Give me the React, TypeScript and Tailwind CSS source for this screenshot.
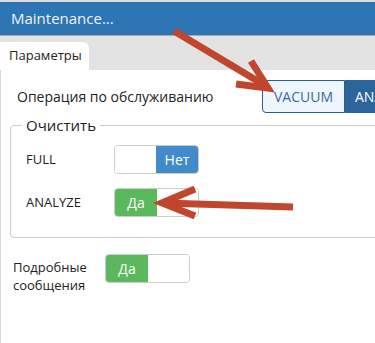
import React from 'react';

function Toggle({ on }: { on: boolean }) {
    return (
        <div className="flex w-[85px] h-[29px] border border-[#cccccc] rounded-[4px] overflow-hidden text-[14px] text-white">
            {on ? (
                <>
                    <div className="w-[42px] bg-[#5cb85c] flex items-center justify-center">Да</div>
                    <div className="flex-1 bg-white" />
                </>
            ) : (
                <>
                    <div className="flex-1 bg-white" />
                    <div className="w-[42px] bg-[#428bca] flex items-center justify-center">Нет</div>
                </>
            )}
        </div>
    );
}

function Arrows() {
    return (
        <svg className="absolute inset-0 pointer-events-none" width="375" height="343" viewBox="0 0 375 343">
            <g stroke="#c1462e" strokeWidth="7" fill="none" strokeLinecap="butt" strokeLinejoin="miter">
                <line x1="174" y1="31" x2="266" y2="86" />
                <polyline points="251,61 268,88 236,84" />
                <line x1="293" y1="207" x2="164" y2="203" />
                <polyline points="195,189 162,203 195,216" />
            </g>
        </svg>
    );
}

export default function App() {
    return (
        <div className="relative w-[375px] h-[343px] overflow-hidden bg-white flex flex-col text-[#222222]" style={{ fontFamily: '"Open Sans", "Noto Sans", sans-serif' }}>
            <div className="h-[2px] bg-[#dedede]" />
            <div className="h-[33px] bg-[#2e75b3] pl-[11px] flex items-center text-[15px] text-[#edf3fa]">Maintenance...</div>
            <div className="h-px bg-[#a9a9a9]" />
            <div className="h-[34px] bg-[#e3e3e3] flex items-end">
                <div className="w-[89px] h-[28px] bg-white rounded-tr-[6px] pl-[9px] flex items-center text-[13px]">Параметры</div>
            </div>

            <div className="flex-1 border-l border-[#d6d6d6] pl-[9px] flex flex-col">
                <div className="mt-[10px] h-[33px] flex items-center">
                    <div className="ml-[7px] w-[245px] shrink-0 text-[14px]">Операция по обслуживанию</div>
                    <div className="flex h-[33px] text-[14px] shrink-0">
                        <div className="w-[83px] bg-[#eef5fc] border border-[#2a5d8f] rounded-l-[4px] flex items-center justify-center text-[#3a6b9c]">VACUUM</div>
                        <div className="w-[80px] bg-[#2c659c] text-white flex items-center pl-[10px]">ANALYZE</div>
                    </div>
                </div>

                <fieldset className="mt-[2px] w-[380px] border border-[#cccccc] rounded-[4px] pl-[15px] pb-[20px]">
                    <legend className="-ml-[4px] px-[4px] text-[15px] leading-[20px]">Очистить</legend>
                    <div className="mt-[10px] flex items-center">
                        <div className="w-[88px] text-[13px]">FULL</div>
                        <Toggle on={false} />
                    </div>
                    <div className="mt-[14px] flex items-center">
                        <div className="w-[88px] text-[13px]">ANALYZE</div>
                        <Toggle on={true} />
                    </div>
                </fieldset>

                <div className="mt-[16px] ml-[3px] flex items-start">
                    <div className="w-[92px] mt-[4px] text-[13px] leading-[18px]">Подробные сообщения</div>
                    <Toggle on={true} />
                </div>
            </div>

            <Arrows />
        </div>
    );
}
